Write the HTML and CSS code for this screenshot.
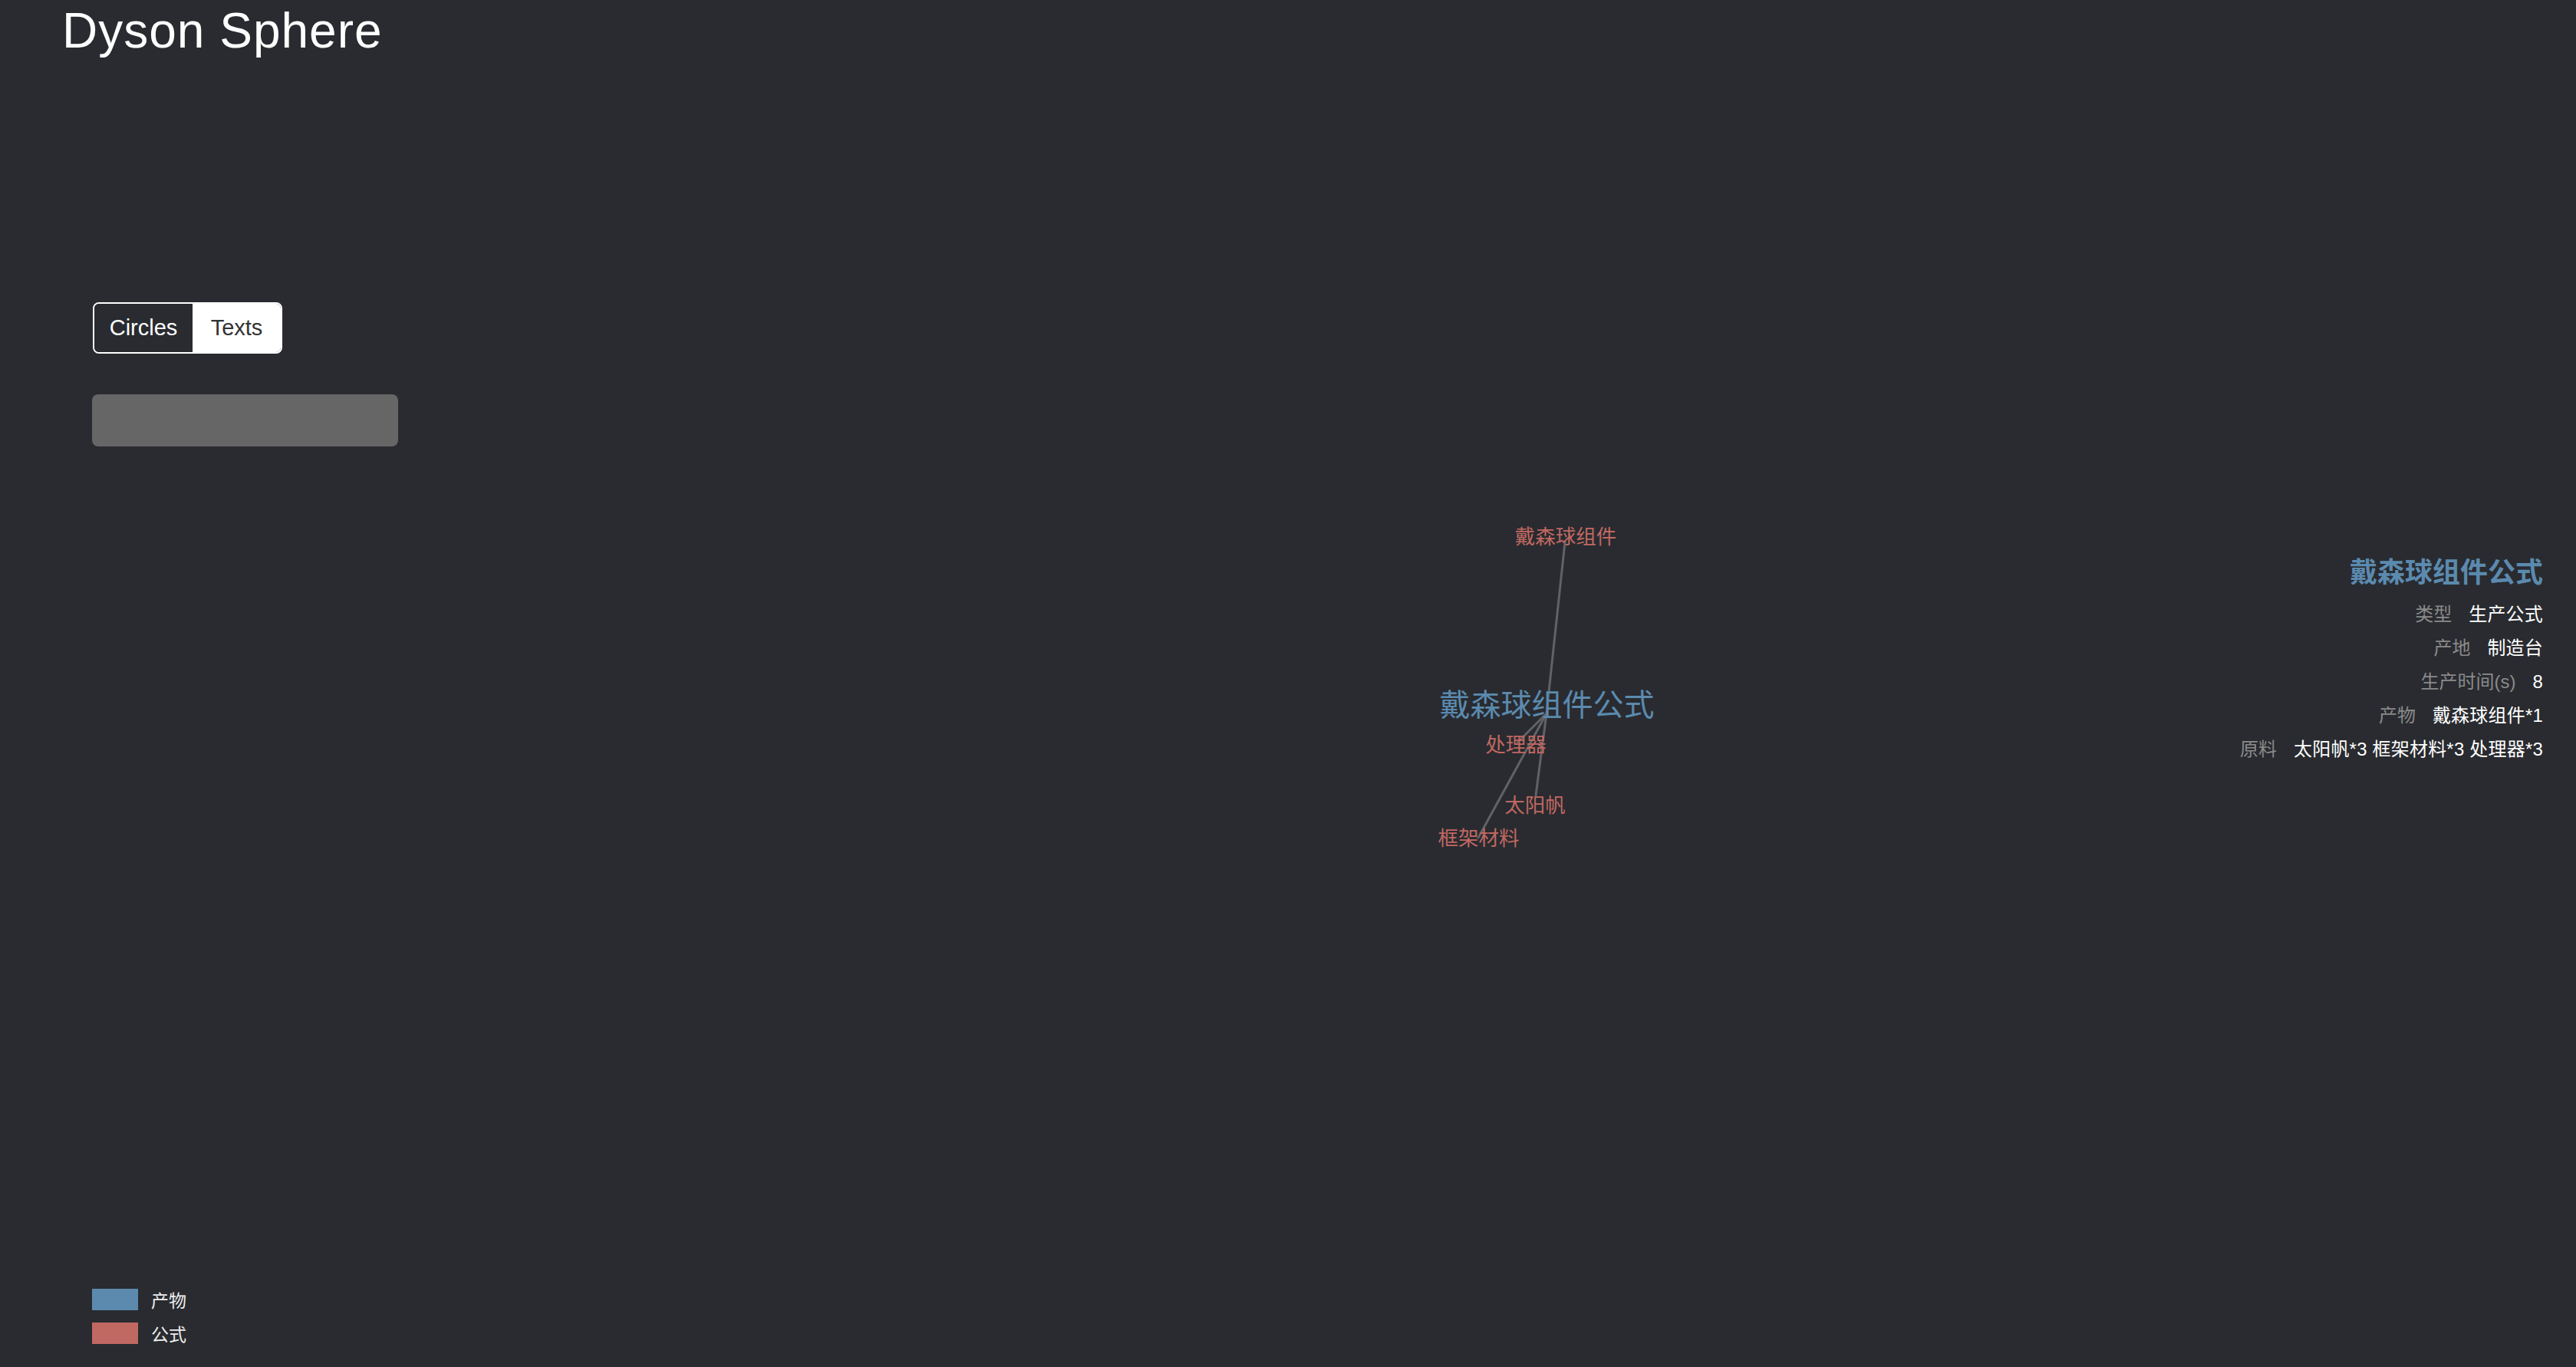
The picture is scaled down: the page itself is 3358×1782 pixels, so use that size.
FILE: index.html
```html
<!DOCTYPE html>
<html lang="zh">
<head>
<meta charset="utf-8">
<title>Dyson Sphere</title>
<link rel="stylesheet" href="styles.css">
</head>
<body>
<div class="app">
  <svg class="graph" width="3358" height="1782" viewBox="0 0 3358 1782" xmlns="http://www.w3.org/2000/svg">
    <g class="links">
      <line x1="2016" y1="930" x2="2040" y2="707"/>
      <line x1="2016" y1="930" x2="1978" y2="968"/>
      <line x1="2016" y1="930" x2="2002" y2="1037"/>
      <line x1="2016" y1="930" x2="1927" y2="1092"/>
    </g>
    <g class="nodes">
      <text class="node recipe" x="2041" y="709">戴森球组件</text>
      <text class="node item main" x="2016.5" y="933">戴森球组件公式</text>
      <text class="node recipe" x="1976" y="980">处理器</text>
      <text class="node recipe" x="2001" y="1059">太阳帆</text>
      <text class="node recipe" x="1927.5" y="1102">框架材料</text>
    </g>
  </svg>

  <aside class="sidebar">
    <h1 class="title">Dyson Sphere</h1>
    <div class="toggle">
      <button class="seg seg-active">Circles</button>
      <button class="seg">Texts</button>
    </div>
    <div class="search"></div>
    <ul class="legend">
      <li class="legend-row"><span class="swatch swatch-item"></span><span class="legend-label">产物</span></li>
      <li class="legend-row"><span class="swatch swatch-recipe"></span><span class="legend-label">公式</span></li>
    </ul>
  </aside>

  <section class="info">
    <h2 class="info-title">戴森球组件公式</h2>
    <div class="info-row"><span class="info-label">类型</span><span class="info-value">生产公式</span></div>
    <div class="info-row"><span class="info-label">产地</span><span class="info-value">制造台</span></div>
    <div class="info-row"><span class="info-label">生产时间(s)</span><span class="info-value">8</span></div>
    <div class="info-row"><span class="info-label">产物</span><span class="info-value">戴森球组件*1</span></div>
    <div class="info-row"><span class="info-label">原料</span><span class="info-value">太阳帆*3 框架材料*3 处理器*3</span></div>
  </section>
</div>
</body>
</html>
```

FILE: styles.css
```css
html, body {
  margin: 0;
  padding: 0;
  background: #292b30;
}

body {
  font-family: "Liberation Sans", "Noto Sans CJK SC", sans-serif;
  color: #ffffff;
}

.app {
  position: relative;
  display: flex;
  justify-content: space-between;
  height: 1782px;
  overflow: hidden;
}

.graph {
  position: absolute;
  left: 0;
  top: 0;
}

.links line {
  stroke: #606266;
  stroke-width: 3;
  stroke-linecap: round;
}

.node {
  font-family: "Noto Sans CJK SC", sans-serif;
  font-size: 26.5px;
  text-anchor: middle;
}

.recipe {
  fill: #c06862;
}

.item {
  fill: #5b8aae;
}

.main {
  font-size: 40px;
}

/* sidebar */
.sidebar {
  position: relative;
  display: flex;
  flex-direction: column;
  padding: 3px 0 30px 0;
}

.title {
  margin: 0 0 0 81px;
  font-size: 64px;
  line-height: 74px;
  font-weight: normal;
  letter-spacing: 1px;
  color: #ffffff;
}

.toggle {
  display: flex;
  align-self: flex-start;
  margin: 317px 0 0 121px;
  border: 2px solid #ffffff;
  border-radius: 8px;
  overflow: hidden;
}

.seg {
  margin: 0;
  padding: 0;
  border: 0;
  height: 63px;
  font-family: "Liberation Sans", sans-serif;
  font-size: 29px;
  line-height: 63px;
  text-align: center;
  background: #ffffff;
  color: #333333;
  width: 115px;
}

.seg-active {
  width: 128px;
  background: #292b30;
  color: #ffffff;
}

.search {
  margin: 53px 0 0 120px;
  width: 399px;
  height: 68px;
  border-radius: 8px;
  background: #666666;
}

.legend {
  list-style: none;
  margin: auto 0 0 120px;
  padding: 0;
  display: flex;
  flex-direction: column;
  gap: 16px;
}

.legend-row {
  display: flex;
  align-items: center;
  gap: 17px;
  height: 28px;
}

.swatch {
  width: 60px;
  height: 28px;
}

.swatch-item {
  background: #5b8aae;
}

.swatch-recipe {
  background: #c06862;
}

.legend-label {
  font-family: "Noto Sans CJK SC", sans-serif;
  font-size: 23px;
  line-height: 28px;
  color: #eeeeee;
}

/* info panel */
.info {
  position: relative;
  padding: 716px 43px 0 0;
  text-align: right;
}

.info-title {
  margin: 0 0 9px 0;
  font-family: "Noto Sans CJK SC", sans-serif;
  font-size: 36px;
  line-height: 54px;
  font-weight: bold;
  color: #5b8aae;
}

.info-row {
  display: flex;
  justify-content: flex-end;
  gap: 22px;
  font-size: 24px;
  line-height: 44px;
  white-space: nowrap;
}

.info-label {
  color: #8a8a8a;
}

.info-value {
  color: #ffffff;
  letter-spacing: 0.2px;
}
```
